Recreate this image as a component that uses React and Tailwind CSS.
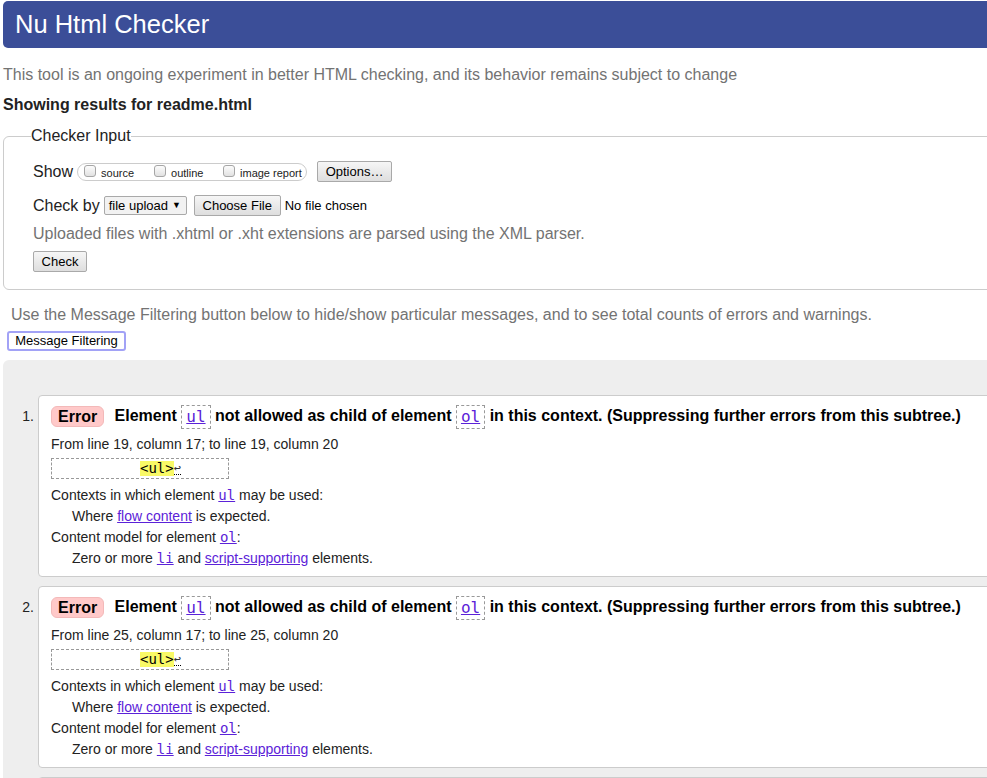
import React from "react";

const LINK = "text-[#5b22d8] underline";
const MONO = { fontFamily: '"DejaVu Sans Mono", monospace' };

function Checkbox({ label, w }) {
  return (
    <div className={"flex items-start " + w}>
      <span className="mt-[1px] block h-[12px] w-[12px] shrink-0 rounded-[3px] border border-[#a6a6a6] bg-gradient-to-b from-[#fcfcfc] to-[#e2e2e2]" />
      <span className="ml-[5px] mt-[3px] block text-[11px] leading-[13px] text-[#222]">{label}</span>
    </div>
  );
}

function Btn({ children, className = "" }) {
  return (
    <span
      className={
        "flex items-center justify-center rounded-[2px] border border-[#a9a9a9] bg-gradient-to-b from-[#f6f6f6] to-[#dedede] text-[13px] text-black " +
        className
      }
    >
      {children}
    </span>
  );
}

function Code({ children, link = true }) {
  return (
    <code style={MONO} className={link ? LINK : ""}>
      {children}
    </code>
  );
}

function Message({ n, line }) {
  return (
    <div className="flex">
      <div className="w-[35px] shrink-0 pr-[4px] pt-[13px] text-right text-[14px] leading-[16px] text-[#222]">
        {n}.
      </div>
      <div className="flex-1 rounded-[4px] border border-[#cccccc] bg-white pb-[7px] pl-[12px] pt-[8px]">
        <div className="whitespace-nowrap text-[16px] font-bold leading-[24px] text-black">
          <span className="mr-[6px] inline-block h-[21px] rounded-[6px] border border-[#f3b9b9] bg-[#ffc9c9] px-[6px] align-middle leading-[19px]">
            Error
          </span>{" "}
          Element{" "}
          <span className="inline-block h-[24px] border border-dashed border-[#999] px-[4px] align-middle font-normal leading-[21px]">
            <Code>ul</Code>
          </span>{" "}
          not allowed as child of element{" "}
          <span className="inline-block h-[24px] border border-dashed border-[#999] px-[4px] align-middle font-normal leading-[21px]">
            <Code>ol</Code>
          </span>{" "}
          in this context. (Suppressing further errors from this subtree.)
        </div>
        <div className="mt-[5px] text-[14px] leading-[21px] text-[#222]">
          From line {line}, column 17; to line {line}, column 20
        </div>
        <div className="mt-[3px] flex h-[21px] w-[178px] items-center border border-dashed border-[#999] pl-[88px]">
          <span style={MONO} className="bg-[#f9f966] text-[14px] leading-[15px] text-black">
            &lt;ul&gt;
          </span>
          <span style={MONO} className="border-b border-dotted border-black text-[12px] leading-[12px] text-[#333]">
            ↩
          </span>
        </div>
        <div className="mt-[6px] text-[14px] leading-[21px] text-[#222]">
          <div>
            Contexts in which element <Code>ul</Code> may be used:
          </div>
          <div className="pl-[21px]">
            Where <a className={LINK}>flow content</a> is expected.
          </div>
          <div>
            Content model for element <Code>ol</Code>:
          </div>
          <div className="pl-[21px]">
            Zero or more <Code>li</Code> and <a className={LINK}>script-supporting</a> elements.
          </div>
        </div>
      </div>
    </div>
  );
}

export default function App() {
  return (
    <div
      className="h-screen w-screen overflow-hidden bg-white"
      style={{ fontFamily: '"Liberation Sans", Arial, sans-serif' }}
    >
      <div className="w-[1030px] pl-[3px]">
        <div className="mt-[1px] flex h-[47px] items-center rounded-[5px] bg-[#3b4e98] pl-[12px] text-[25.5px] text-white">
          Nu Html Checker
        </div>
        <p className="mt-[18px] text-[16px] leading-[18px] text-[#737373]">
          This tool is an ongoing experiment in better HTML checking, and its behavior remains subject to change
        </p>
        <p className="mt-[12px] text-[16px] font-bold leading-[18px] text-[#222]">
          Showing results for readme.html
        </p>
        <fieldset className="mt-[13px] rounded-[6px] border border-[#cccccc] pb-[17px] pl-[27px] pt-[16px]">
          <legend className="px-0 text-[16px] leading-[18px] text-[#222]">Checker Input</legend>
          <div className="pl-[2px]">
            <div className="flex h-[21px] items-center">
              <span className="text-[16px] text-[#222]">Show</span>
              <div className="ml-[4px] flex h-[18px] w-[230px] items-start rounded-[9px] border border-[#cccccc] pl-[6px]">
                <Checkbox label="source" w="w-[70px]" />
                <Checkbox label="outline" w="w-[69px]" />
                <Checkbox label="image report" w="" />
              </div>
              <Btn className="ml-[10px] h-[21px] w-[75px]">Options…</Btn>
            </div>
            <div className="mt-[13px] flex h-[21px] items-center">
              <span className="text-[16px] text-[#222]">Check by</span>
              <span className="ml-[4px] flex h-[19px] w-[83px] items-center rounded-[2px] border border-[#a9a9a9] bg-[#f2f2f2] pl-[4px] text-[13px] text-black">
                file upload <span className="ml-[4px] text-[9px]">▼</span>
              </span>
              <Btn className="ml-[7px] h-[21px] w-[87px]">Choose File</Btn>
              <span className="ml-[4px] text-[13px] text-black">No file chosen</span>
            </div>
            <p className="mt-[9px] text-[16px] leading-[18px] text-[#737373]">
              Uploaded files with .xhtml or .xht extensions are parsed using the XML parser.
            </p>
            <Btn className="mt-[8px] h-[21px] w-[54px]">Check</Btn>
          </div>
        </fieldset>
        <p className="mt-[15px] pl-[8px] text-[16px] leading-[20px] text-[#737373]">
          Use the Message Filtering button below to hide/show particular messages, and to see total counts of errors and warnings.
        </p>
        <div className="ml-[4px] mt-[6px] flex h-[20px] w-[119px] items-center justify-center rounded-[3px] border-2 border-[#a2a2f6] bg-white text-[13px] text-black">
          Message Filtering
        </div>
        <div className="mt-[9px] flex flex-col gap-[9px] rounded-tl-[6px] bg-[#eeeeee] pb-[20px] pt-[35px]">
          <Message n={1} line={19} />
          <Message n={2} line={25} />
          <Message n={3} line={31} />
        </div>
      </div>
    </div>
  );
}
